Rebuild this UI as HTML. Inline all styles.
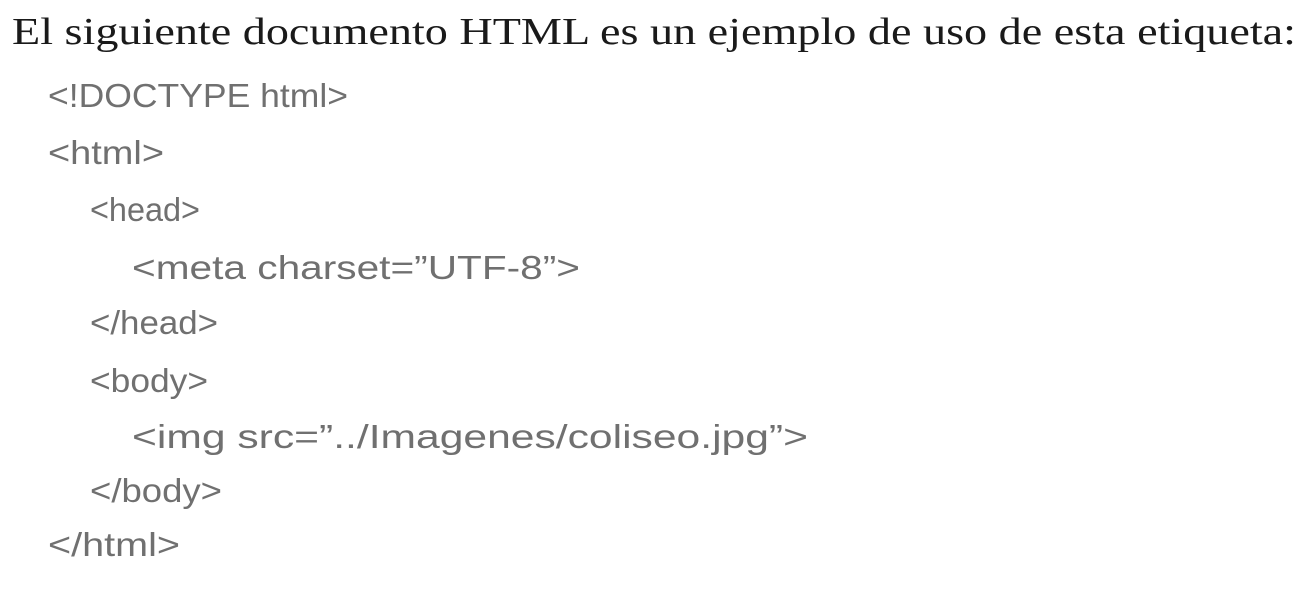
<!DOCTYPE html>
<html><head><meta charset="utf-8"><style>
html,body{margin:0;padding:0;background:#fff;width:1316px;height:595px;overflow:hidden}
svg{display:block}
.h{font-family:"Liberation Serif",serif;font-size:38px;fill:#1a1a1a}
.c{font-family:"Liberation Sans",sans-serif;font-size:33px;fill:#707070}
</style></head><body>
<svg width="1316" height="595" xmlns="http://www.w3.org/2000/svg">
<text class="h" x="12" y="44" textLength="1284" lengthAdjust="spacingAndGlyphs">El siguiente documento HTML es un ejemplo de uso de esta etiqueta:</text>
<text class="c" x="48" y="107" textLength="300" lengthAdjust="spacingAndGlyphs">&lt;!DOCTYPE html&gt;</text>
<text class="c" x="48" y="164" textLength="116" lengthAdjust="spacingAndGlyphs">&lt;html&gt;</text>
<text class="c" x="90" y="221" textLength="110" lengthAdjust="spacingAndGlyphs">&lt;head&gt;</text>
<text class="c" x="132" y="279" textLength="448" lengthAdjust="spacingAndGlyphs">&lt;meta charset=”UTF-8”&gt;</text>
<text class="c" x="90" y="334" textLength="128" lengthAdjust="spacingAndGlyphs">&lt;/head&gt;</text>
<text class="c" x="90" y="392" textLength="118" lengthAdjust="spacingAndGlyphs">&lt;body&gt;</text>
<text class="c" x="132" y="448" textLength="676" lengthAdjust="spacingAndGlyphs">&lt;img src=”../Imagenes/coliseo.jpg”&gt;</text>
<text class="c" x="90" y="502" textLength="132" lengthAdjust="spacingAndGlyphs">&lt;/body&gt;</text>
<text class="c" x="48" y="556" textLength="132" lengthAdjust="spacingAndGlyphs">&lt;/html&gt;</text>
</svg>
</body></html>
